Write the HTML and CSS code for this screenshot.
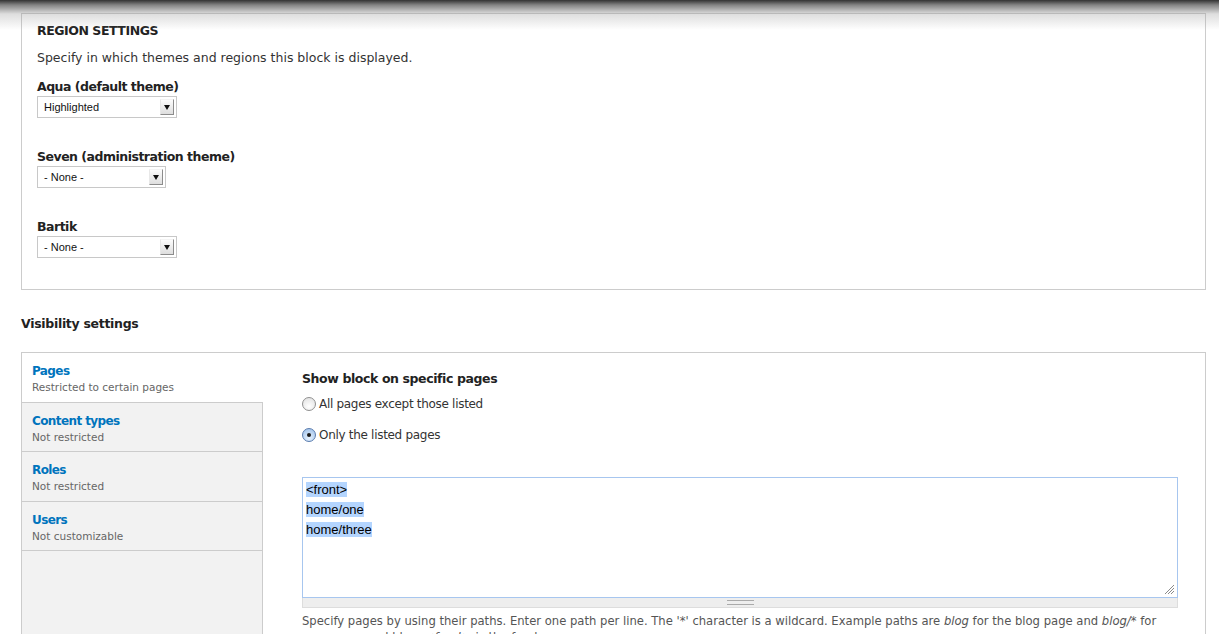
FILE: index.html
```html
<!DOCTYPE html>
<html>
<head>
<meta charset="utf-8">
<link rel="stylesheet" href="styles.css">
</head>
<body>
<div class="shade"></div>
<div class="page">
  <div class="fieldset region">
    <div class="legend">REGION SETTINGS</div>
    <div class="intro">Specify in which themes and regions this block is displayed.</div>
    <div class="item">
      <div class="label">Aqua (default theme)</div>
      <div class="select w140"><span class="sel-text">Highlighted</span><span class="sel-btn"></span></div>
    </div>
    <div class="item">
      <div class="label">Seven (administration theme)</div>
      <div class="select w129"><span class="sel-text">- None -</span><span class="sel-btn"></span></div>
    </div>
    <div class="item">
      <div class="label">Bartik</div>
      <div class="select w140"><span class="sel-text">- None -</span><span class="sel-btn"></span></div>
    </div>
  </div>

  <h2 class="section-title">Visibility settings</h2>

  <div class="vtabs">
    <ul class="vtab-list">
      <li class="vtab active"><a class="vtab-title">Pages</a><span class="vtab-desc">Restricted to certain pages</span></li>
      <li class="vtab"><a class="vtab-title">Content types</a><span class="vtab-desc">Not restricted</span></li>
      <li class="vtab"><a class="vtab-title">Roles</a><span class="vtab-desc">Not restricted</span></li>
      <li class="vtab"><a class="vtab-title">Users</a><span class="vtab-desc">Not customizable</span></li>
    </ul>
    <div class="vtab-pane">
      <div class="pane-title">Show block on specific pages</div>
      <div class="radio first"><span class="radio-dot"></span><span>All pages except those listed</span></div>
      <div class="radio"><span class="radio-dot checked"></span><span>Only the listed pages</span></div>
      <div class="textarea-wrap">
        <div class="textarea">
          <div class="line"><span class="hl">&lt;front&gt;</span></div>
          <div class="line"><span class="hl">home/one</span></div>
          <div class="line"><span class="hl">home/three</span></div>
          <svg class="resize" width="11" height="11" viewBox="0 0 11 11"><path d="M10 1L1 10M10 4L4 10M10 7L7 10" stroke="#8a8a8a" stroke-width="1"/></svg>
        </div>
        <div class="grippie"><span class="grip-lines"></span></div>
      </div>
      <div class="description">Specify pages by using their paths. Enter one path per line. The '*' character is a wildcard. Example paths are <em>blog</em> for the blog page and <em>blog/*</em> for every personal blog. <em>&lt;front&gt;</em> is the front page.</div>
    </div>
  </div>
</div>
</body>
</html>
```

FILE: styles.css
```css
html, body {
  margin: 0;
  padding: 0;
  background: #fff;
}
body {
  font-family: "DejaVu Sans", "Lucida Grande", sans-serif;
  font-size: 13px;
  color: #333;
  overflow: hidden;
}
.shade {
  position: absolute;
  left: 0;
  top: 0;
  right: 0;
  height: 32px;
  background: linear-gradient(to bottom, rgba(40,40,40,0.95) 0px, rgba(80,80,80,0.7) 5px, rgba(160,160,160,0.35) 14px, rgba(255,255,255,0) 30px);
  pointer-events: none;
  z-index: 5;
}
.page {
  padding: 13px 13px 0 21px;
}
.fieldset {
  border: 1px solid #ccc;
}
.region {
  padding: 8px 15px 31px 15px;
}
.legend {
  font-weight: bold;
  line-height: 18px;
  color: #222;
  font-size: 12.5px;
  letter-spacing: -0.45px;
}
.intro {
  margin-top: 9px;
  line-height: 18px;
  font-size: 12.5px;
}
.item {
  margin-top: 11px;
}
.item + .item {
  margin-top: 30px;
}
.label {
  font-weight: bold;
  line-height: 18px;
  margin-bottom: 0;
  color: #222;
  font-size: 12.5px;
  letter-spacing: -0.5px;
}
.select {
  box-sizing: border-box;
  height: 22px;
  border: 1px solid #c8c8c8;
  background: #fff;
  display: flex;
  align-items: center;
  justify-content: space-between;
  padding: 0 1px 0 6px;
  font-family: "Liberation Sans", Arial, sans-serif;
  font-size: 11px;
  color: #111;
}
.w140 { width: 140px; }
.w129 { width: 129px; }
.sel-btn {
  width: 14px;
  height: 16px;
  margin-right: 1px;
  box-sizing: border-box;
  border-right: 1px solid #8c8c8c;
  border-bottom: 1px solid #8c8c8c;
  border-left: 1px solid #e8e8e8;
  border-top: 1px solid #f4f4f4;
  background: linear-gradient(#fdfdfd, #dedede);
  position: relative;
}
.sel-btn::after {
  content: "";
  position: absolute;
  left: 3px;
  top: 5px;
  border-left: 3.5px solid transparent;
  border-right: 3.5px solid transparent;
  border-top: 5px solid #111;
}
.section-title {
  margin: 25px 0 19px 0;
  font-size: 12.5px;
  line-height: 18px;
  font-weight: bold;
  color: #222;
  letter-spacing: -0.3px;
}
.vtabs {
  border: 1px solid #ccc;
  display: flex;
  height: 320px;
}
.vtab-list {
  list-style: none;
  margin: 0;
  padding: 0;
  width: 240px;
  background: #f2f2f2;
  border-right: 1px solid #ccc;
  flex: none;
}
.vtab {
  box-sizing: border-box;
  height: 49.5px;
  padding: 9px 10px 0 10px;
  border-bottom: 1px solid #ccc;
}
.vtab.active {
  background: #fff;
  margin-right: -1px;
}
.vtab-title {
  display: block;
  font-weight: bold;
  color: #0074bd;
  line-height: 18px;
  font-size: 12px;
  letter-spacing: -0.6px;
}
.vtab-desc {
  display: block;
  font-size: 10.5px;
  line-height: 14px;
  color: #666;
}
.vtab-pane {
  flex: 1;
  padding: 17px 27px 0 39px;
}
.pane-title {
  font-weight: bold;
  line-height: 18px;
  color: #222;
  font-size: 12.5px;
  letter-spacing: -0.4px;
}
.radio {
  display: flex;
  align-items: center;
  line-height: 18px;
  margin-top: 13px;
  font-size: 12px;
  letter-spacing: -0.3px;
}
.radio.first {
  margin-top: 7px;
}
.radio-dot {
  box-sizing: border-box;
  width: 14px;
  height: 14px;
  border-radius: 50%;
  border: 1px solid #8f8f8f;
  background: radial-gradient(circle at 50% 70%, #ffffff 0%, #e8e8e8 70%);
  margin-right: 3px;
  position: relative;
  flex: none;
}
.radio-dot.checked {
  border-color: #5a7cae;
  background: radial-gradient(circle at 50% 75%, #e6f2ff 0%, #a9c8ec 80%);
}
.radio-dot.checked::after {
  content: "";
  position: absolute;
  left: 4px;
  top: 4px;
  width: 4px;
  height: 4px;
  border-radius: 50%;
  background: #1a1a1a;
}
.textarea-wrap {
  margin-top: 33px;
}
.textarea {
  box-sizing: border-box;
  height: 121px;
  border: 1px solid #a7c6ef;
  padding: 2px 3px;
  font-family: "Liberation Sans", Arial, sans-serif;
  font-size: 13px;
  line-height: 20px;
  color: #000;
  position: relative;
}
.hl {
  background: #b4d5fe;
}
.resize {
  position: absolute;
  right: 2px;
  bottom: 2px;
}
.grippie {
  box-sizing: border-box;
  height: 10px;
  background: #eee;
  border: 1px solid #ddd;
  border-top: none;
  display: flex;
  justify-content: center;
  align-items: center;
}
.grip-lines {
  width: 27px;
  height: 3px;
  border-top: 1px solid #aaa;
  border-bottom: 1px solid #aaa;
}
.description {
  margin-top: 5px;
  font-size: 11.6px;
  line-height: 16px;
  color: #555;
}
```
